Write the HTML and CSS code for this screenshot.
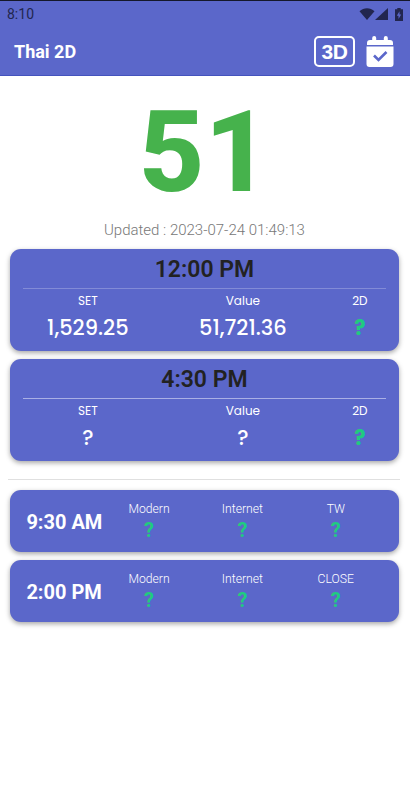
FILE: index.html
```html
<!DOCTYPE html>
<html>
<head>
  <meta charset="utf-8">
  <title>Thai 2D</title>
  <link rel="stylesheet" href="styles.css">
</head>
<body>
  <header>
    <div class="status-bar">
      <span class="clock">8:10</span>
      <div class="status-icons">
        <svg width="16" height="12" viewBox="0 0 16 12"><path d="M.5 3.200C4.800-.7 11.200-.7 15.500 3.200L8 12z"/></svg>
        <svg width="13" height="12" viewBox="0 0 13 12"><path d="M13 0v12H0z"/></svg>
        <svg class="battery" width="8" height="13" viewBox="0 0 8 13"><path d="M2.300 0h3.400v1.300H8V13H0V1.300h2.300z"/><path class="bolt" d="M4.500 3.200v3.200h1.700L3.500 11V7.800H1.800z"/></svg>
      </div>
    </div>
    <div class="app-bar">
      <h1>Thai 2D</h1>
      <div class="btn-3d">3D</div>
      <svg class="calendar" width="28" height="31" viewBox="0 0 28 31">
        <path d="M4 4h2.200V2a2 2 0 0 1 4 0v2h7.600V2a2 2 0 0 1 4 0v2H24a3 3 0 0 1 3 3v2H1V7a3 3 0 0 1 3-3z"/>
        <path d="M.5 10.500h27V28a3 3 0 0 1-3 3h-21a3 3 0 0 1-3-3z"/>
        <path class="check" d="M8 19.500l4.500 4.500 8-8"/>
      </svg>
    </div>
  </header>

  <main>
    <div class="number">51</div>
    <p class="updated">Updated : 2023-07-24 01:49:13</p>

    <section class="card result">
      <h2>12:00 PM</h2>
      <div class="columns">
        <div class="label">SET</div>
        <div class="label">Value</div>
        <div class="label">2D</div>
        <div class="value">1,529.25</div>
        <div class="value">51,721.36</div>
        <div class="value green">?</div>
      </div>
    </section>

    <section class="card result evening">
      <h2>4:30 PM</h2>
      <div class="columns">
        <div class="label">SET</div>
        <div class="label">Value</div>
        <div class="label">2D</div>
        <div class="value">?</div>
        <div class="value">?</div>
        <div class="value green">?</div>
      </div>
    </section>

    <hr>

    <section class="card modern">
      <h3>9:30 AM</h3>
      <div class="item">Modern<b>?</b></div>
      <div class="item">Internet<b>?</b></div>
      <div class="item">TW<b>?</b></div>
    </section>

    <section class="card modern">
      <h3>2:00 PM</h3>
      <div class="item">Modern<b>?</b></div>
      <div class="item">Internet<b>?</b></div>
      <div class="item">CLOSE<b>?</b></div>
    </section>
  </main>
</body>
</html>
```
FILE: styles.css
```css
* {
  box-sizing: border-box;
}

body {
  margin: 0;
  font-family: Roboto, sans-serif;
  background-color: #fff;
}

h1, h2, h3, p {
  margin: 0;
}

svg {
  display: block;
}

header {
  height: 76px;
  border-top: 1px solid #15182b;
  border-bottom: 1px solid #4453bd;
  background-color: #5b67ca;
}

/* Status bar */
.status-bar {
  display: flex;
  justify-content: space-between;
  height: 27px;
  padding: 0 7px;
  color: #22264f;
}

.clock {
  font-size: 14px;
  line-height: 27px;
}

.status-icons {
  display: flex;
  align-items: flex-start;
  padding-top: 7px;
  fill: #22264f;
}

.battery {
  margin-left: 7px;
}

.bolt {
  fill: #5b67ca;
}

/* App bar */
.app-bar {
  display: flex;
  align-items: center;
  height: 46px;
  padding: 0 16px 0 14px;
  color: #fff;
}

h1 {
  flex: 1;
  font-size: 18px;
  font-weight: 700;
}

.btn-3d {
  width: 41px;
  height: 31px;
  margin-right: 11px;
  border: 2px solid #fff;
  border-radius: 5px;
  font: 700 21px/28px "Liberation Sans", sans-serif;
  letter-spacing: -0.5px;
  text-align: center;
}

.calendar {
  fill: #fff;
}

.check {
  fill: none;
  stroke: #5b67ca;
  stroke-width: 2.6;
}

/* Live number */
main {
  padding: 0 11.5px 0 10.4px;
}

.number {
  height: 144px;
  color: #46b24c;
  font-size: 114px;
  font-weight: 800;
  line-height: 152px;
  text-align: center;
}

.updated {
  height: 29.4px;
  color: #777;
  font-size: 15px;
  font-weight: 300;
  line-height: 21px;
  text-align: center;
}

.card {
  margin-bottom: 8px;
  border-radius: 11px;
  background-color: #5b67ca;
  color: #fff;
  box-shadow: 0 2px 5px rgba(0, 0, 0, 0.35);
}

/* Result cards */
.result {
  height: 102px;
  padding: 0 13px;
}

h2 {
  height: 40px;
  border-bottom: 1px solid #828bd7;
  color: #222;
  font-size: 23px;
  font-weight: 600;
  line-height: 42px;
  text-align: center;
}

.evening h2 {
  border-bottom-color: #aab0e5;
}

.columns {
  display: grid;
  grid-template-columns: 129px 181px 53px;
  text-align: center;
}

.label {
  font: 400 12px/24px Poppins, Inter, sans-serif;
}

.value {
  font: 500 21px/30px Poppins, Inter, sans-serif;
}

.green {
  color: #1fcb80;
  font-weight: 700;
}

hr {
  height: 1px;
  margin: 18px -1px 10px -2px;
  border: 0;
  background-color: #e0e0e0;
}

/* Modern / internet cards */
.modern {
  display: flex;
  height: 62px;
  padding: 10px 16px 0;
}

h3 {
  width: 76px;
  font-size: 20px;
  font-weight: 700;
  line-height: 45px;
  white-space: nowrap;
}

.item {
  width: 93.5px;
  font-size: 12.2px;
  font-weight: 300;
  line-height: 18px;
  text-align: center;
}

.item b {
  display: block;
  color: #1fcb80;
  font-size: 20px;
  font-weight: 700;
  line-height: 25px;
}
```
